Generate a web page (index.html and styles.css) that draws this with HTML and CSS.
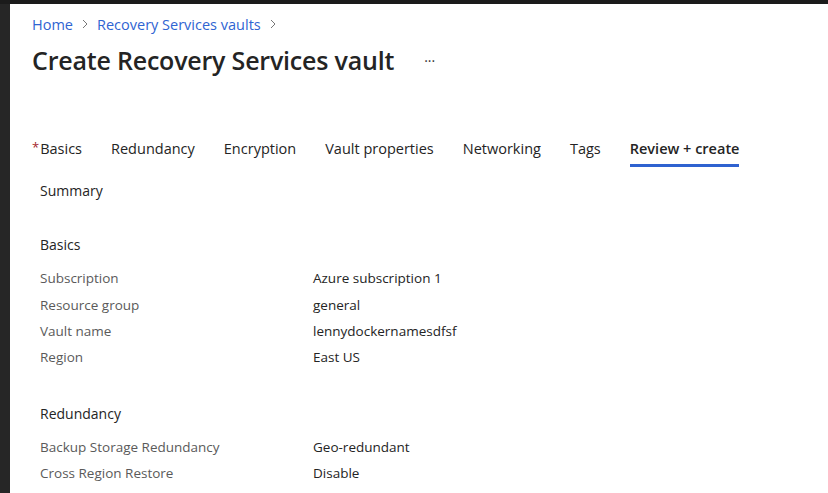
FILE: index.html
```html
<!DOCTYPE html>
<html lang="en">
<head>
<meta charset="utf-8">
<title>Create Recovery Services vault</title>
<link rel="stylesheet" href="styles.css">
</head>
<body>
<div class="frame">
  <main class="page">
    <nav class="breadcrumb">
      <a class="crumb" href="#">Home</a>
      <svg class="chev" width="8" height="10" viewBox="0 0 8 10"><path d="M2 1l4 4-4 4" fill="none" stroke="#777" stroke-width="1"/></svg>
      <a class="crumb" href="#">Recovery Services vaults</a>
      <svg class="chev" width="8" height="10" viewBox="0 0 8 10"><path d="M2 1l4 4-4 4" fill="none" stroke="#777" stroke-width="1"/></svg>
    </nav>
    <header class="title-row">
      <h1 class="title">Create Recovery Services vault</h1>
      <span class="more">&middot;&middot;&middot;</span>
    </header>
    <div class="tabs">
      <span class="tab"><span class="req">*</span>Basics</span>
      <span class="tab">Redundancy</span>
      <span class="tab">Encryption</span>
      <span class="tab">Vault properties</span>
      <span class="tab">Networking</span>
      <span class="tab">Tags</span>
      <span class="tab active">Review + create</span>
    </div>
    <section class="summary">
      <h2 class="summary-title">Summary</h2>
      <h3 class="group-title">Basics</h3>
      <dl class="rows">
        <div class="row"><dt>Subscription</dt><dd>Azure subscription 1</dd></div>
        <div class="row"><dt>Resource group</dt><dd>general</dd></div>
        <div class="row"><dt>Vault name</dt><dd>lennydockernamesdfsf</dd></div>
        <div class="row"><dt>Region</dt><dd>East US</dd></div>
      </dl>
      <h3 class="group-title second">Redundancy</h3>
      <dl class="rows">
        <div class="row"><dt>Backup Storage Redundancy</dt><dd>Geo-redundant</dd></div>
        <div class="row"><dt>Cross Region Restore</dt><dd>Disable</dd></div>
      </dl>
    </section>
  </main>
</div>
</body>
</html>
```

FILE: styles.css
```css
* { box-sizing: border-box; }
html, body { margin: 0; padding: 0; height: 100%; }
body {
  background: #1b1b1b;
  font-family: "Open Sans", "Noto Sans", sans-serif;
  color: #242424;
  overflow: hidden;
}
.frame {
  height: 100%;
  padding-top: 4px;
}
.page {
  height: 100%;
  background: #ffffff;
  border-left: 10px solid #262626;
  padding: 10px 0 0 22px;
}
.breadcrumb {
  display: flex;
  align-items: center;
  gap: 8px;
  height: 20px;
  font-size: 14.5px;
}
.crumb { color: #2f64d2; text-decoration: none; }
.chev { display: block; }
.title-row {
  display: flex;
  align-items: center;
  margin-top: 9px;
  height: 34px;
}
.title {
  margin: 0;
  font-size: 25px;
  font-weight: 600;
  color: #242424;
  letter-spacing: -0.2px;
}
.more {
  margin-left: 30px;
  font-size: 14px;
  color: #333;
}
.tabs {
  display: flex;
  gap: 29px;
  margin-top: 56px;
  font-size: 14.5px;
}
.tab {
  position: relative;
  padding: 6px 0 9px;
  color: #242424;
}
.req { color: #a4262c; margin-right: 1px; font-size: 13px; position: relative; top: -2px; }
.tab.active {
  font-weight: 600;
  border-bottom: 3px solid #2f62d0;
  padding-bottom: 6px;
}
.summary {
  padding-left: 8px;
  font-size: 13.5px;
}
.summary-title {
  margin: 14px 0 0;
  font-size: 14px;
  font-weight: 400;
  color: #242424;
}
.group-title {
  margin: 35px 0 0;
  font-size: 14px;
  font-weight: 400;
  color: #242424;
}
.group-title.second { margin-top: 33px; }
.rows { margin: 11px 0 0; }
.row {
  display: grid;
  grid-template-columns: 273px 1fr;
  height: 26.4px;
  align-items: center;
}
.row dt { color: #5a5a5a; }
.row dd { margin: 0; color: #242424; }
```
